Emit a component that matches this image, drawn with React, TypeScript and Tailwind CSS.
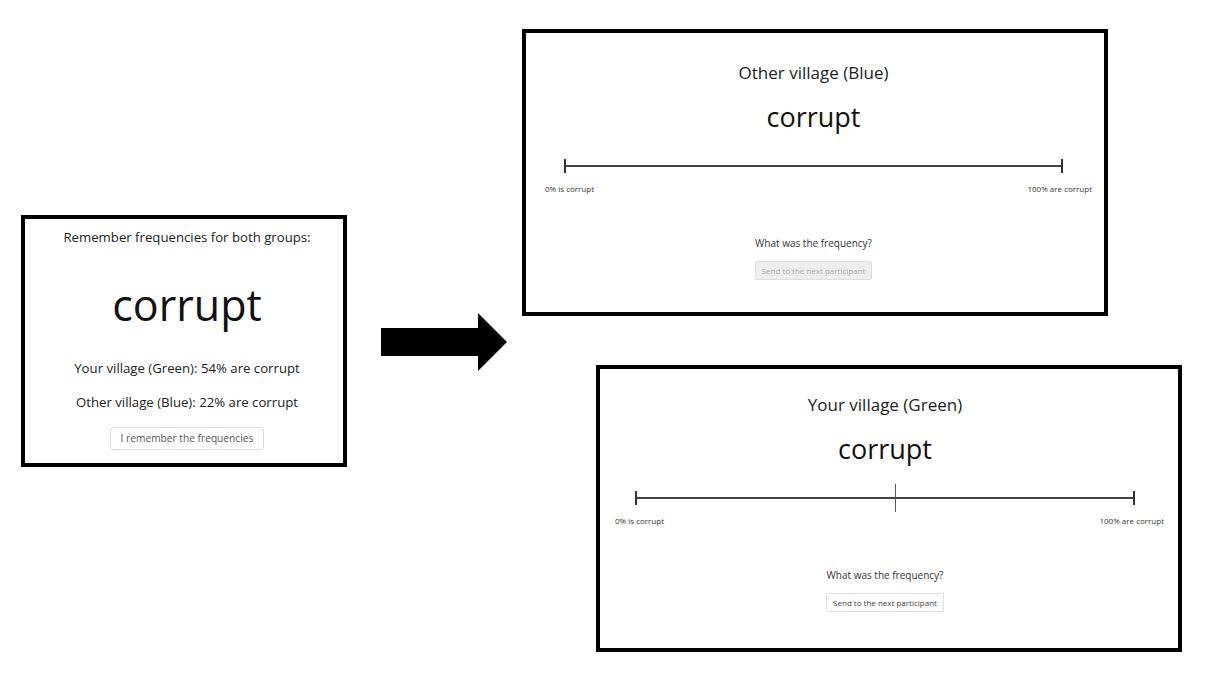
const font = { fontFamily: '"Open Sans", "Noto Sans", sans-serif' }

function SliderPanel({
  title,
  disabled,
  thumb,
  className,
  padClass,
  lineClass,
}: {
  title: string
  disabled?: boolean
  thumb?: boolean
  className: string
  padClass: string
  lineClass: string
}) {
  return (
    <div className={`border-[4px] border-black bg-white w-[586px] h-[287px] flex flex-col items-center text-[#222] ${className}`}>
      <div className="text-[17px] leading-[24px]">{title}</div>
      <div className="text-[27px] leading-[40px] mt-[12px] text-[#111]">corrupt</div>

      {/* slider */}
      <div className={`w-full mt-[22px] ${padClass}`}>
        <div className={`relative h-[14px] flex items-center ${lineClass}`}>
          <div className="w-[2px] h-[14px] bg-[#333]"></div>
          <div className="flex-1 h-[1.5px] bg-[#444]"></div>
          <div className="w-[2px] h-[14px] bg-[#333]"></div>
          {thumb && <div className="absolute left-[52%] top-[-7px] w-px h-[28px] bg-[#555]"></div>}
        </div>
        <div className="flex justify-between mt-[10px] text-[8px] leading-[12px] text-[#333]">
          <span>0% is corrupt</span>
          <span>100% are corrupt</span>
        </div>
      </div>

      <div className="text-[10px] leading-[16px] mt-[40px] text-[#333]">What was the frequency?</div>
      <button
        className={
          disabled
            ? 'mt-[10px] h-[19px] px-[6px] text-[8px] rounded-[2px] border border-[#ddd] bg-[#eee] text-[#aaa]'
            : 'mt-[10px] h-[19px] px-[6px] text-[8px] rounded-[2px] border border-[#ddd] bg-white text-[#444]'
        }
      >
        Send to the next participant
      </button>
    </div>
  )
}

export default function App() {
  return (
    <div className="w-[1207px] h-[676px] bg-white flex items-start overflow-hidden" style={font}>
      {/* Memory screen */}
      <div className="ml-[21px] mt-[215px] w-[326px] h-[252px] pl-[6px] border-[4px] border-black flex flex-col items-center text-[#222]">
        <div className="mt-[8px] text-[13.2px] leading-[20px]">Remember frequencies for both groups:</div>
        <div className="mt-[30px] text-[43px] leading-[56px] text-[#111]">corrupt</div>
        <div className="mt-[25px] text-[13.2px] leading-[20px]">Your village (Green): 54% are corrupt</div>
        <div className="mt-[14px] text-[13.2px] leading-[20px]">Other village (Blue): 22% are corrupt</div>
        <button className="mt-[15px] h-[23px] px-[10px] text-[10.2px] rounded-[3px] border border-[#ddd] bg-white text-[#555]">
          I remember the frequencies
        </button>
      </div>

      {/* Arrow */}
      <svg className="ml-[34px] mt-[313px]" width="126" height="58" viewBox="0 0 126 58">
        <polygon points="0,15 97,15 97,0 126,29 97,58 97,43 0,43" fill="#000" />
      </svg>

      {/* Recall screens */}
      <div className="ml-[15px] mt-[29px] flex flex-col">
        <SliderPanel
          title="Other village (Blue)"
          disabled
          className="pt-[28px] pr-[3px]"
          padClass="pl-[19px] pr-[9px]"
          lineClass="ml-[19px] mr-[29px]"
        />
        <SliderPanel
          title="Your village (Green)"
          thumb
          className="ml-[74px] mt-[49px] pt-[24px] pr-[8px]"
          padClass="pl-[15px] pr-[6px]"
          lineClass="ml-[20px] mr-[29px]"
        />
      </div>
    </div>
  )
}
